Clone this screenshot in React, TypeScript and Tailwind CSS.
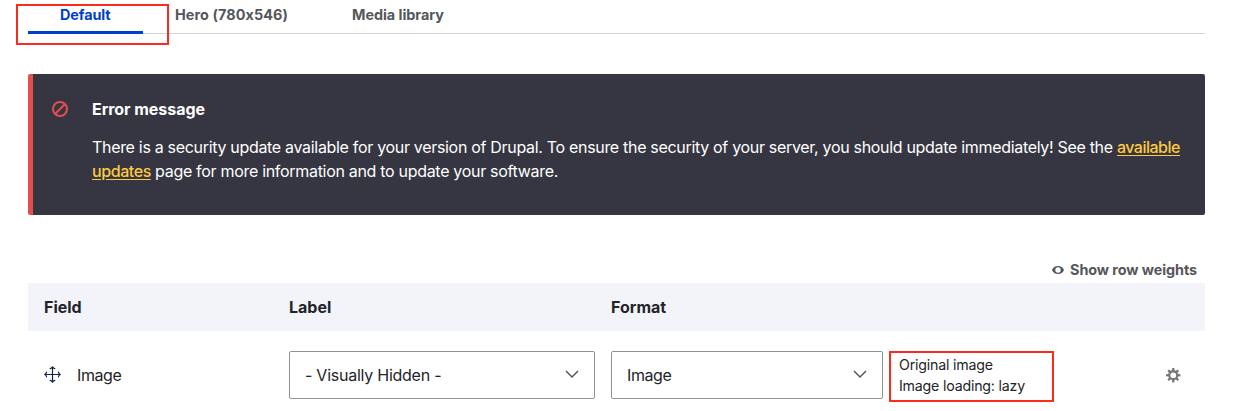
import React from "react";

function Chevron() {
  return (
    <svg width="14" height="9" viewBox="0 0 14 9" fill="none" stroke="#55565b" strokeWidth="1.5">
      <path d="M1 1l6 6 6-6" />
    </svg>
  );
}

function Select({ label, className }: { label: React.ReactNode; className: string }) {
  return (
    <button
      className={`flex h-12 items-center justify-between rounded-[2px] border border-[#919297] bg-white pl-[15px] pr-[15px] ${className}`}
    >
      {label}
      <span className="-mt-[2px]">
        <Chevron />
      </span>
    </button>
  );
}

export default function App() {
  return (
    <div className="h-[411px] w-[1247px] overflow-hidden bg-white pl-7 pr-[42px] font-['Inter',sans-serif] text-base text-[#232429]">
      <nav className="relative flex h-[34px] border-b border-[#d3d4d9] text-[14.4px] font-bold text-[#55565b]">
        <a className="h-[34px] w-[115px] border-b-[3px] border-[#003ecc] pl-8 leading-[30px] text-[#003ecc]">
          <span className="tracking-[-0.08px]">Default</span>
        </a>
        <a className="w-[177px] pl-8 leading-[30px]">
          <span className="tracking-[0.09px]">Hero (780x546)</span>
        </a>
        <a className="pl-8 leading-[30px]">
          <span className="tracking-[-0.03px]">Media library</span>
        </a>
        <div className="absolute -left-3 top-1 h-[41px] w-[153px] border-2 border-[#fb2b1f]" />
      </nav>

      <section className="mt-10 flex h-[141px] rounded-[2px] border-l-[5px] border-[#e34f4f] bg-[#353641] pl-[19px] pt-[23px] text-white">
        <svg className="mt-1 shrink-0" width="16" height="16" viewBox="0 0 16 16" fill="none" stroke="#e34f4f" strokeWidth="2">
          <circle cx="8" cy="8" r="7" />
          <path d="M3.3 12.7l9.4-9.4" />
        </svg>
        <div className="pl-6">
          <h2 className="whitespace-nowrap font-bold leading-6">
            <span className="tracking-[-0.05px]">Error message</span>
          </h2>
          <p className="mt-[14px] whitespace-nowrap leading-6">
            <span className="tracking-[-0.313px]">
              There is a security update available for your version of Drupal. To ensure the security of your server, you should update immediately! See the{" "}
            </span>
            <a className="font-medium tracking-[-0.5px] text-[#fdca40] underline underline-offset-2">available</a>
            <br />
            <a className="font-medium tracking-[-0.42px] text-[#fdca40] underline underline-offset-2">updates</a>
            <span className="tracking-[-0.305px]"> page for more information and to update your software.</span>
          </p>
        </div>
      </section>

      <div className="mb-[2px] mt-[44px] flex h-[22px] items-center justify-end gap-[6px] pr-2 text-[14.4px] font-bold text-[#55565b]">
        <svg width="12" height="8" viewBox="0 0 12 8">
          <path fill="#55565b" fillRule="evenodd" d="M6 0C3.2 0 1 1.6 0 4c1 2.4 3.2 4 6 4s5-1.600 6-4C11 1.600 8.800 0 6 0Zm0 1.300a2.700 2.700 0 1 1 0 5.400 2.700 2.700 0 0 1 0-5.400Z" />
        </svg>
        <span className="tracking-[-0.08px]">Show row weights</span>
      </div>

      <div className="flex h-12 items-center bg-[#f3f4f9] pl-4 font-bold">
        <div className="w-[245px]"><span className="tracking-[0px]">Field</span></div>
        <div className="w-[322px]"><span className="tracking-[0px]">Label</span></div>
        <div><span className="tracking-[0px]">Format</span></div>
      </div>

      <div className="flex h-[88px] items-center pl-4">
        <div className="flex w-[245px] items-center">
          <svg className="-mt-px" width="17" height="17" viewBox="0 0 17 17" fill="none" stroke="#10204a" strokeWidth="1.200" strokeLinecap="round" strokeLinejoin="round">
            <path d="M8.500 .8v15.400M.8 8.500h15.400M6.200 2.600Q7.600 2.300 8.500.8q.9 1.500 2.300 1.800M6.200 14.400q1.400.3 2.300 1.800.9-1.500 2.300-1.800M2.600 6.200Q2.300 7.600.8 8.500q1.500.9 1.800 2.300M14.400 6.200q.3 1.400 1.800 2.300-1.500.9-1.800 2.300" />
          </svg>
          <span className="pl-4 tracking-[-0.4px]">Image</span>
        </div>
        <Select className="w-[306px]" label={<span className="tracking-[-0.25px]">- Visually Hidden -</span>} />
        <Select className="ml-4 w-[272px]" label={<span className="tracking-[-0.4px]">Image</span>} />
        <div className="ml-[6px] mt-[3px] h-[51px] w-[165px] border-2 border-[#fb2b1f] pl-2 pt-px text-[14.2px] leading-[21px]">
          <div><span className="tracking-[-0.2px]">Original image</span></div>
          <div><span className="tracking-[-0.2px]">Image loading: lazy</span></div>
        </div>
        <svg className="ml-[111px]" width="16" height="16" viewBox="0 0 16 16">
          <path
            fill="#787878"
            fillRule="evenodd"
            d="M15.426 9.249c.045-.327.076-.658.076-.998 0-.36-.035-.71-.086-1.056l-2.275-.293c-.115-.426-.283-.827-.498-1.201l1.396-1.808c-.416-.551-.906-1.039-1.459-1.452l-1.807 1.391c-.373-.215-.774-.383-1.2-.499l-.292-2.252c-.338-.048-.677-.081-1.029-.081s-.694.033-1.032.082l-.291 2.251c-.426.116-.826.284-1.2.499l-1.805-1.391c-.552.413-1.044.901-1.459 1.452l1.395 1.808c-.215.374-.383.774-.499 1.2l-2.276.294c-.05.346-.085.696-.085 1.056 0 .34.031.671.077.998l2.285.295c.115.426.284.826.499 1.2l-1.417 1.836c.411.55.896 1.038 1.443 1.452l1.842-1.42c.374.215.774.383 1.2.498l.298 2.311c.337.047.677.08 1.025.08s.688-.033 1.021-.08l.299-2.311c.426-.115.826-.283 1.201-.498l1.842 1.42c.547-.414 1.031-.902 1.443-1.452l-1.416-1.837c.215-.373.383-.773.498-1.199zM8.250 5.400a2.850 2.850 0 1 1 0 5.700 2.850 2.850 0 0 1 0-5.700z"
          />
        </svg>
      </div>
    </div>
  );
}
